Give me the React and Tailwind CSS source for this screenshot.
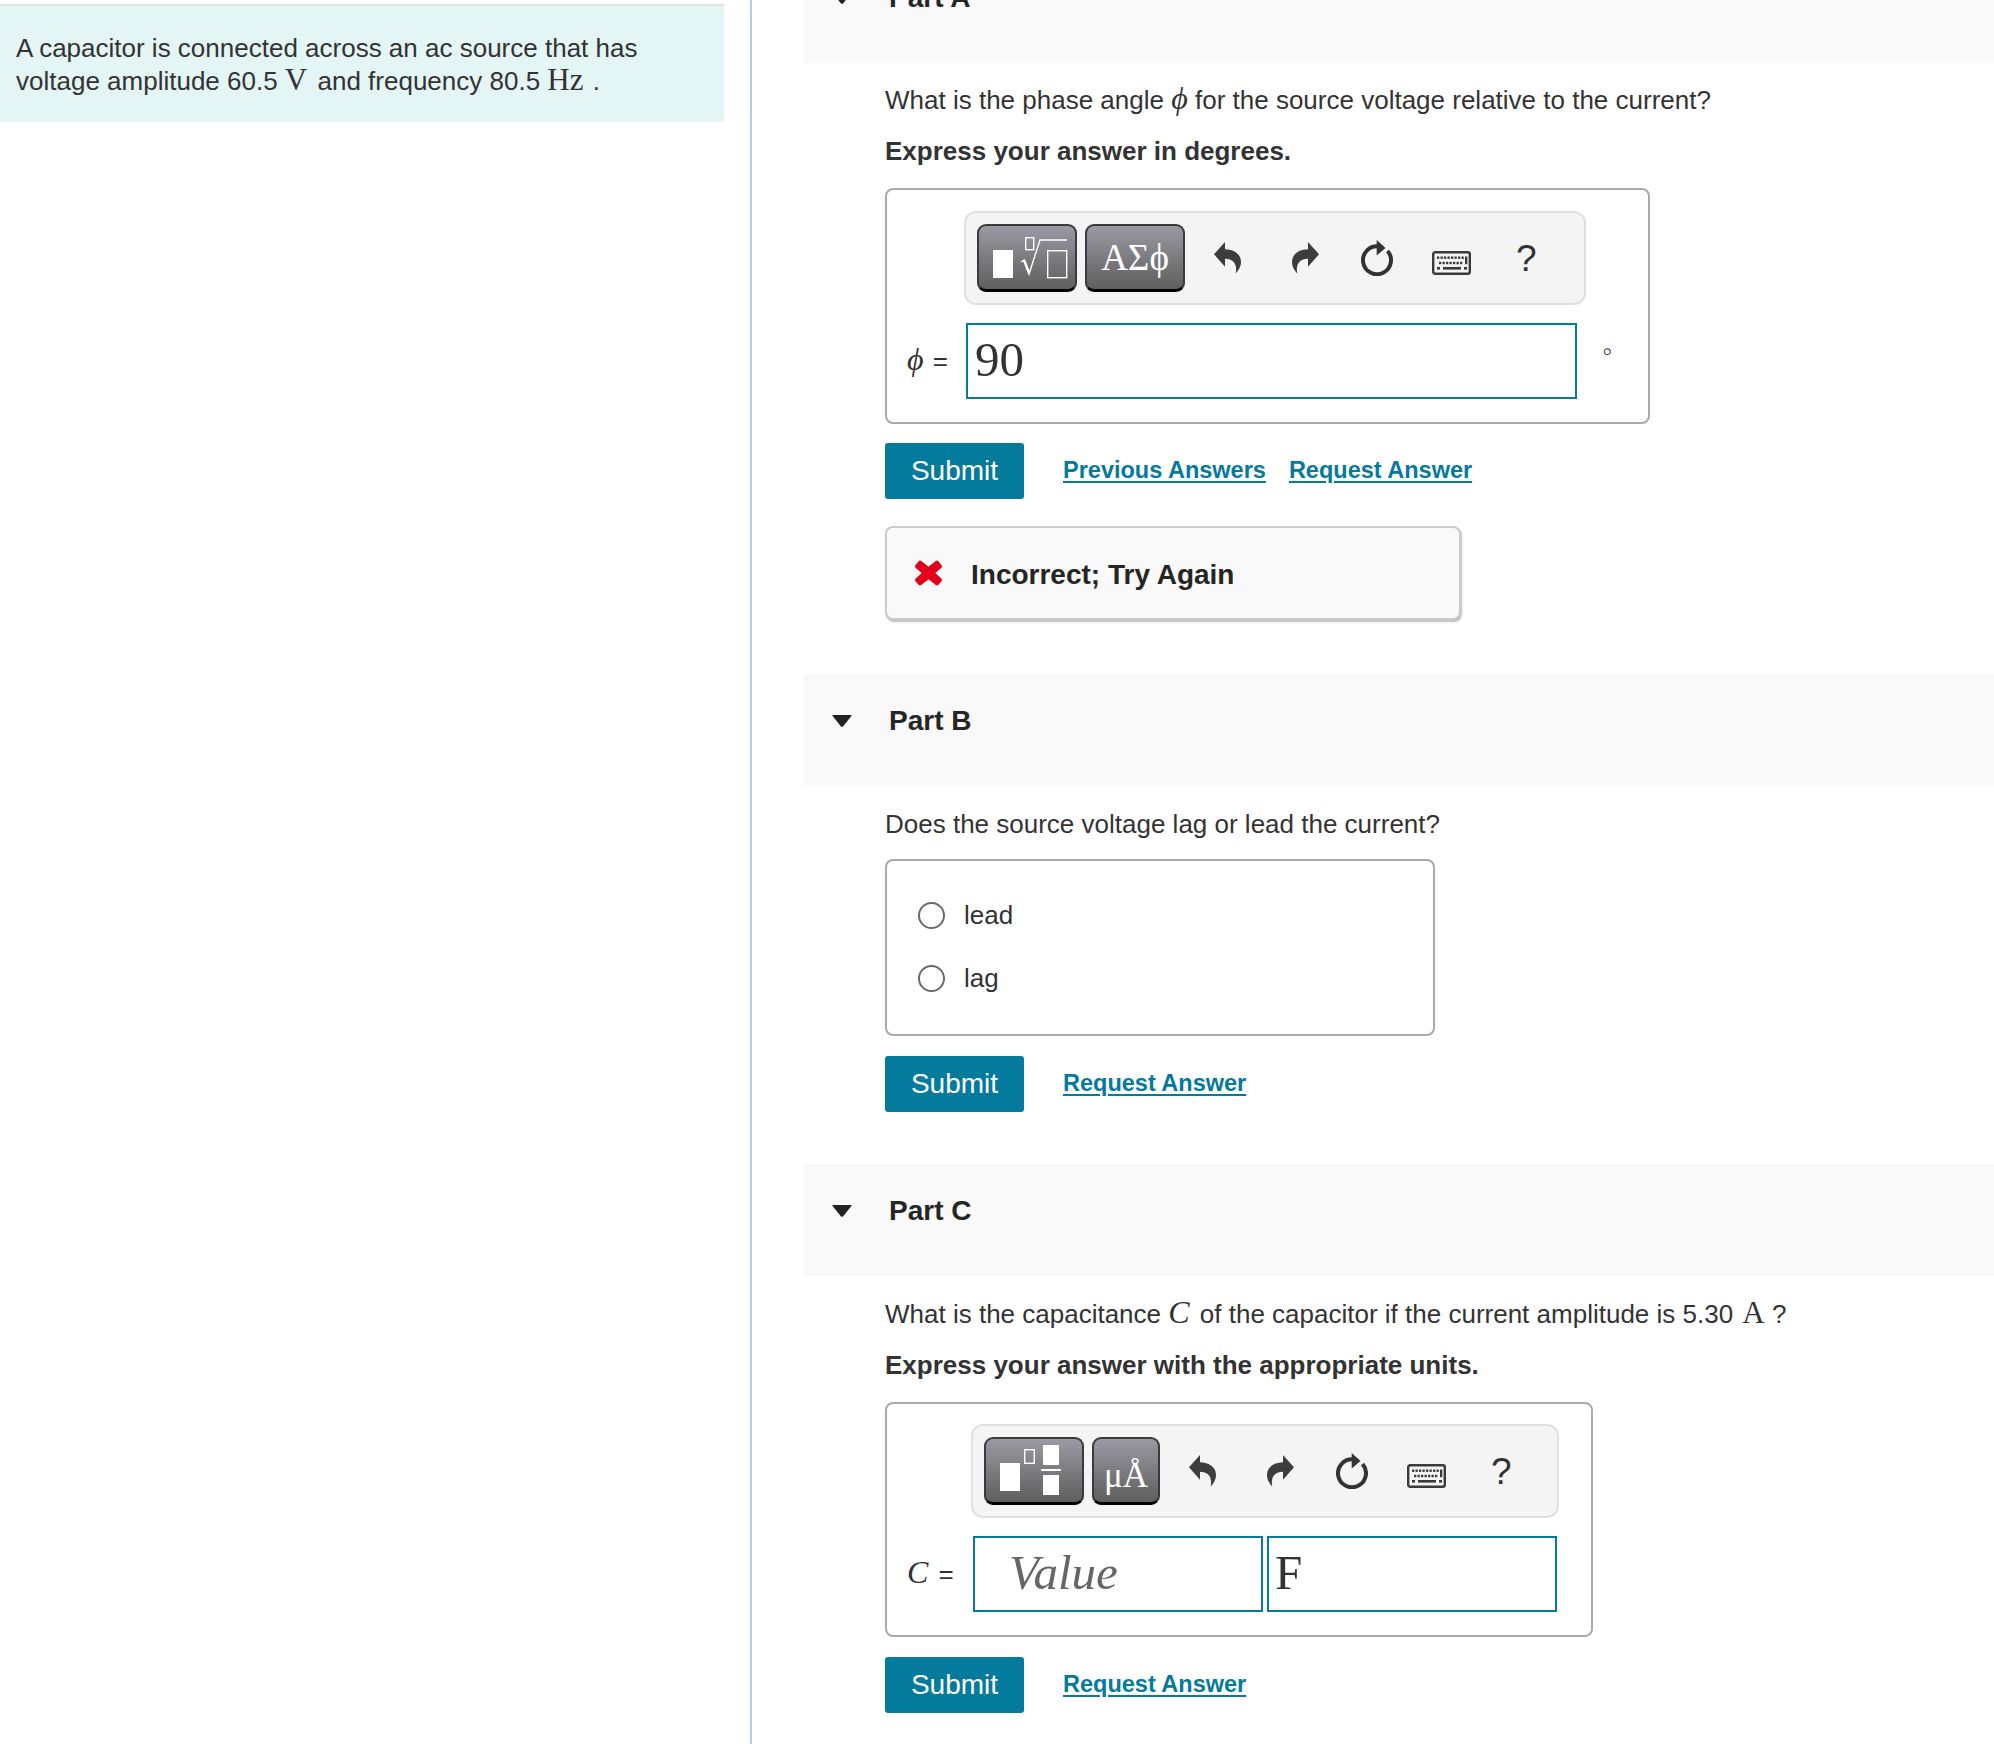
const sans = "font-['Liberation_Sans',Arial,sans-serif]";
const serif = "font-['Liberation_Serif',serif]";
const linkCls = "text-[23.5px] font-bold text-[#047a9c] underline underline-offset-[3px] -mt-[1px]";

function Undo({ flip }) {
  return (
    <svg width="27" height="32" viewBox="0 0 27 32" className={flip ? "-scale-x-100" : ""}>
      <path d="M0 12.3 L11 0 V7.3 C20 7.5 27 12 27 20 C27 25 24 29 21.7 31.5 C23 25 22 17 11 16.7 V24.7 Z" fill="#3d3d3d" />
    </svg>
  );
}

function Refresh() {
  return (
    <svg width="32" height="36" viewBox="0 0 32 36">
      <path d="M17 6.3 A14 14 0 1 0 26.5 11" fill="none" stroke="#333" strokeWidth="4" />
      <path d="M15.7 0 L24.5 8 L15.7 15.5 Z" fill="#333" />
    </svg>
  );
}

function Keyboard() {
  const keys = [];
  for (let i = 0; i < 8; i++) keys.push(<rect key={"a" + i} x={5 + i * 3.5} y="5.5" width="2.3" height="2.4" />);
  for (let i = 0; i < 7; i++) keys.push(<rect key={"b" + i} x={7 + i * 3.5} y="10.8" width="2.3" height="2.4" />);
  return (
    <svg width="39" height="24" viewBox="0 0 39 24" fill="#3a3a3a">
      <rect x="1.2" y="1.2" width="36.6" height="21.6" rx="2" fill="#f4f4f4" stroke="#3a3a3a" strokeWidth="2.4" />
      {keys}
      <rect x="33" y="5.5" width="2.3" height="7.7" />
      <rect x="5" y="16" width="3" height="2.6" />
      <rect x="11" y="16" width="18" height="2.6" />
      <rect x="32" y="16" width="3" height="2.6" />
    </svg>
  );
}

function TemplateIcon() {
  return (
    <svg width="96" height="63" viewBox="0 0 96 63">
      <rect x="14" y="24" width="20" height="28" fill="#fff" />
      <rect x="46.7" y="11.7" width="8" height="12" fill="none" stroke="#fff" strokeWidth="1.4" />
      <path d="M42 36 L45 34 L50 48 L61 14 L88 14" fill="none" stroke="#fff" strokeWidth="1.4" />
      <path d="M45 34 L50 47" fill="none" stroke="#fff" strokeWidth="2.4" />
      <rect x="68.7" y="24.7" width="19" height="27" fill="none" stroke="#fff" strokeWidth="1.4" />
    </svg>
  );
}

function UnitIcon() {
  return (
    <svg width="96" height="63" viewBox="0 0 96 63">
      <rect x="14" y="24" width="20" height="28" fill="#fff" />
      <rect x="38.7" y="10.7" width="9.6" height="13.6" fill="none" stroke="#fff" strokeWidth="1.4" />
      <rect x="57" y="6" width="16" height="20" fill="#fff" />
      <rect x="55" y="30" width="20" height="2" fill="#fff" />
      <rect x="57" y="36" width="16" height="20" fill="#fff" />
    </svg>
  );
}

function DarkButton({ className, children }) {
  return (
    <div className={`${className} h-[68px] rounded-[9px] border-2 border-[#3b3b3b] border-b-[3px] border-b-black bg-gradient-to-b from-[#9b9aa3] to-[#5f5f5f] flex items-center justify-center overflow-hidden shrink-0`}>
      {children}
    </div>
  );
}

function Toolbar({ className, first, second, secondClass }) {
  return (
    <div className={`${className} h-[94px] rounded-[12px] border-2 border-[#e0e0e0] bg-[#f4f4f4] flex items-center pl-[11px]`}>
      <DarkButton className="w-[100px]">{first}</DarkButton>
      <DarkButton className={`ml-[8px] ${secondClass}`}>{second}</DarkButton>
      <div className="flex items-center ml-[29px]">
        <Undo />
        <div className="ml-[51px]"><Undo flip /></div>
        <div className="ml-[42px]"><Refresh /></div>
        <div className="ml-[39px] mt-[9px]"><Keyboard /></div>
        <span className="ml-[45px] text-[37px] leading-none text-[#333]">?</span>
      </div>
    </div>
  );
}

function SubmitRow({ previous }) {
  return (
    <div className="flex items-center">
      <button className="w-[139px] h-[56px] rounded-[3px] bg-[#047a9c] text-white text-[28px] flex items-center justify-center">Submit</button>
      <a className={`ml-[39px] ${linkCls}`}>{previous ? "Previous Answers" : "Request Answer"}</a>
      {previous && <a className={`ml-[23px] ${linkCls}`}>Request Answer</a>}
    </div>
  );
}

function PartHeader({ label, className }) {
  return (
    <div className={`h-[112px] bg-[#f9f9f9] flex items-center pl-[28px] pb-[19px] ${className || ""}`}>
      <svg width="20" height="12" viewBox="0 0 20 12" className="shrink-0">
        <path d="M1 0 L19 0 Q20 0 19.4 1 L11 11.4 Q10 12 9 11.4 L0.6 1 Q0 0 1 0 Z" fill="#222" />
      </svg>
      <span className="ml-[37px] text-[28px] font-bold text-[#252525]">{label}</span>
    </div>
  );
}

function Radio({ label }) {
  return (
    <div className="flex items-center h-[63px]">
      <span className="w-[27px] h-[27px] rounded-full border-2 border-[#6a6a6a] bg-white" />
      <span className="ml-[19px] text-[26px]">{label}</span>
    </div>
  );
}

export default function App() {
  return (
    <div className={`${sans} h-[1744px] w-[1994px] overflow-hidden bg-white flex text-[#333]`}>
      <aside className="w-[752px] shrink-0 border-r-2 border-[#b5cde6] h-full pt-[4px]">
        <div className="w-[724px] h-[118px] border-t-2 border-[#e0e4e4] bg-[#e4f5f6] px-[16px] pt-[27px] text-[26px] leading-[31px]">
          <p>A capacitor is connected across an ac source that has</p>
          <p>
            voltage amplitude 60.5 <span className={`${serif} text-[31px] mr-[3px]`}>V</span> and frequency 80.5 <span className={`${serif} text-[31px] mr-[2px]`}>Hz</span> .
          </p>
        </div>
      </aside>

      <main className="flex-1 pl-[52px] -mt-[49px] text-[26px]">
        <PartHeader label="Part A" />

        <section className="pl-[81px] pt-[16px]">
          <p className="leading-[38px]">
            What is the phase angle <i className={`${serif} text-[32px]`}>ϕ</i> for the source voltage relative to the current?
          </p>
          <p className="mt-[13px] leading-[38px] font-bold">Express your answer in degrees.</p>

          <div className="mt-[18px] w-[765px] h-[236px] rounded-[8px] border-2 border-[#aaa] pt-[21px]">
            <Toolbar className="ml-[77px] w-[622px]" secondClass="w-[100px]" first={<TemplateIcon />} second={<span className={`${serif} text-[37px] text-white`}>ΑΣϕ</span>} />
            <div className="flex items-center mt-[18px] pl-[20px]">
              <div className="w-[59px] -mt-[4px]"><i className={`${serif} text-[32px]`}>ϕ</i><span className="ml-[2px]"> =</span></div>
              <div className={`${serif} w-[611px] h-[76px] border-2 border-[#047a9c] pl-[7px] pb-[2px] flex items-center text-[49px]`}>90</div>
              <span className="ml-[22px] -mt-[19px] text-[26px] font-extralight font-['DejaVu_Sans',sans-serif]">∘</span>
            </div>
          </div>

          <div className="mt-[19px]"><SubmitRow previous /></div>

          <div className="mt-[27px] w-[576px] h-[94px] rounded-[8px] border-2 border-[#cacaca] bg-[#f9f9f9] shadow-[1px_2px_2px_#bdbdbd] flex items-center pl-[27px]">
            <svg width="29" height="28" viewBox="0 0 30 28">
              <path d="M7.5 1.5 L15 7.5 L22.5 1.5 Q24 0.5 25 1.5 L28.5 6 Q29.5 7 28.5 8.5 L22 14 L28.5 20 Q29.5 21 28.5 22.5 L25 26.5 Q24 27.5 22.5 26.5 L15 20.5 L7.5 26.5 Q6 27.5 5 26.5 L1.5 22.5 Q0.5 21 1.5 20 L8 14 L1.5 8.5 Q0.5 7 1.5 6 L5 1.5 Q6 0.5 7.5 1.5 Z" fill="#e2001a" />
            </svg>
            <span className="ml-[28px] pt-[3px] text-[28px] font-bold text-[#252525]">Incorrect; Try Again</span>
          </div>
        </section>

        <PartHeader label="Part B" className="mt-[54px]" />

        <section className="pl-[81px] pt-[19px]">
          <p className="leading-[38px]">Does the source voltage lag or lead the current?</p>
          <div className="mt-[16px] w-[550px] h-[177px] rounded-[8px] border-2 border-[#aaa] pl-[31px] pt-[23px]">
            <Radio label="lead" />
            <Radio label="lag" />
          </div>
          <div className="mt-[20px]"><SubmitRow /></div>
        </section>

        <PartHeader label="Part C" className="mt-[52px]" />

        <section className="pl-[81px] pt-[17px]">
          <p className="leading-[38px]">
            What is the capacitance <i className={`${serif} text-[32px] mr-[3px]`}>C</i> of the capacitor if the current amplitude is 5.30 <span className={`${serif} text-[31px] ml-[2px]`}>A</span> ?
          </p>
          <p className="mt-[13px] leading-[38px] font-bold">Express your answer with the appropriate units.</p>

          <div className="mt-[18px] w-[708px] h-[235px] rounded-[8px] border-2 border-[#aaa] pt-[20px]">
            <Toolbar className="ml-[84px] w-[588px]" secondClass="w-[68px]" first={<UnitIcon />} second={<span className={`${serif} text-[35px] text-white mt-[12px]`}>μÅ</span>} />
            <div className="flex items-center mt-[18px] pl-[20px]">
              <div className="w-[66px] -mt-[4px]"><i className={`${serif} text-[32px]`}>C</i><span className="ml-[3px]"> =</span></div>
              <div className={`${serif} italic w-[290px] h-[76px] border-2 border-[#047a9c] pl-[34px] pb-[2px] flex items-center text-[49px] text-[#666]`}>Value</div>
              <div className={`${serif} ml-[4px] w-[290px] h-[76px] border-2 border-[#047a9c] pl-[6px] pb-[2px] flex items-center text-[49px]`}>F</div>
            </div>
          </div>

          <div className="mt-[20px]"><SubmitRow /></div>
        </section>
      </main>
    </div>
  );
}
